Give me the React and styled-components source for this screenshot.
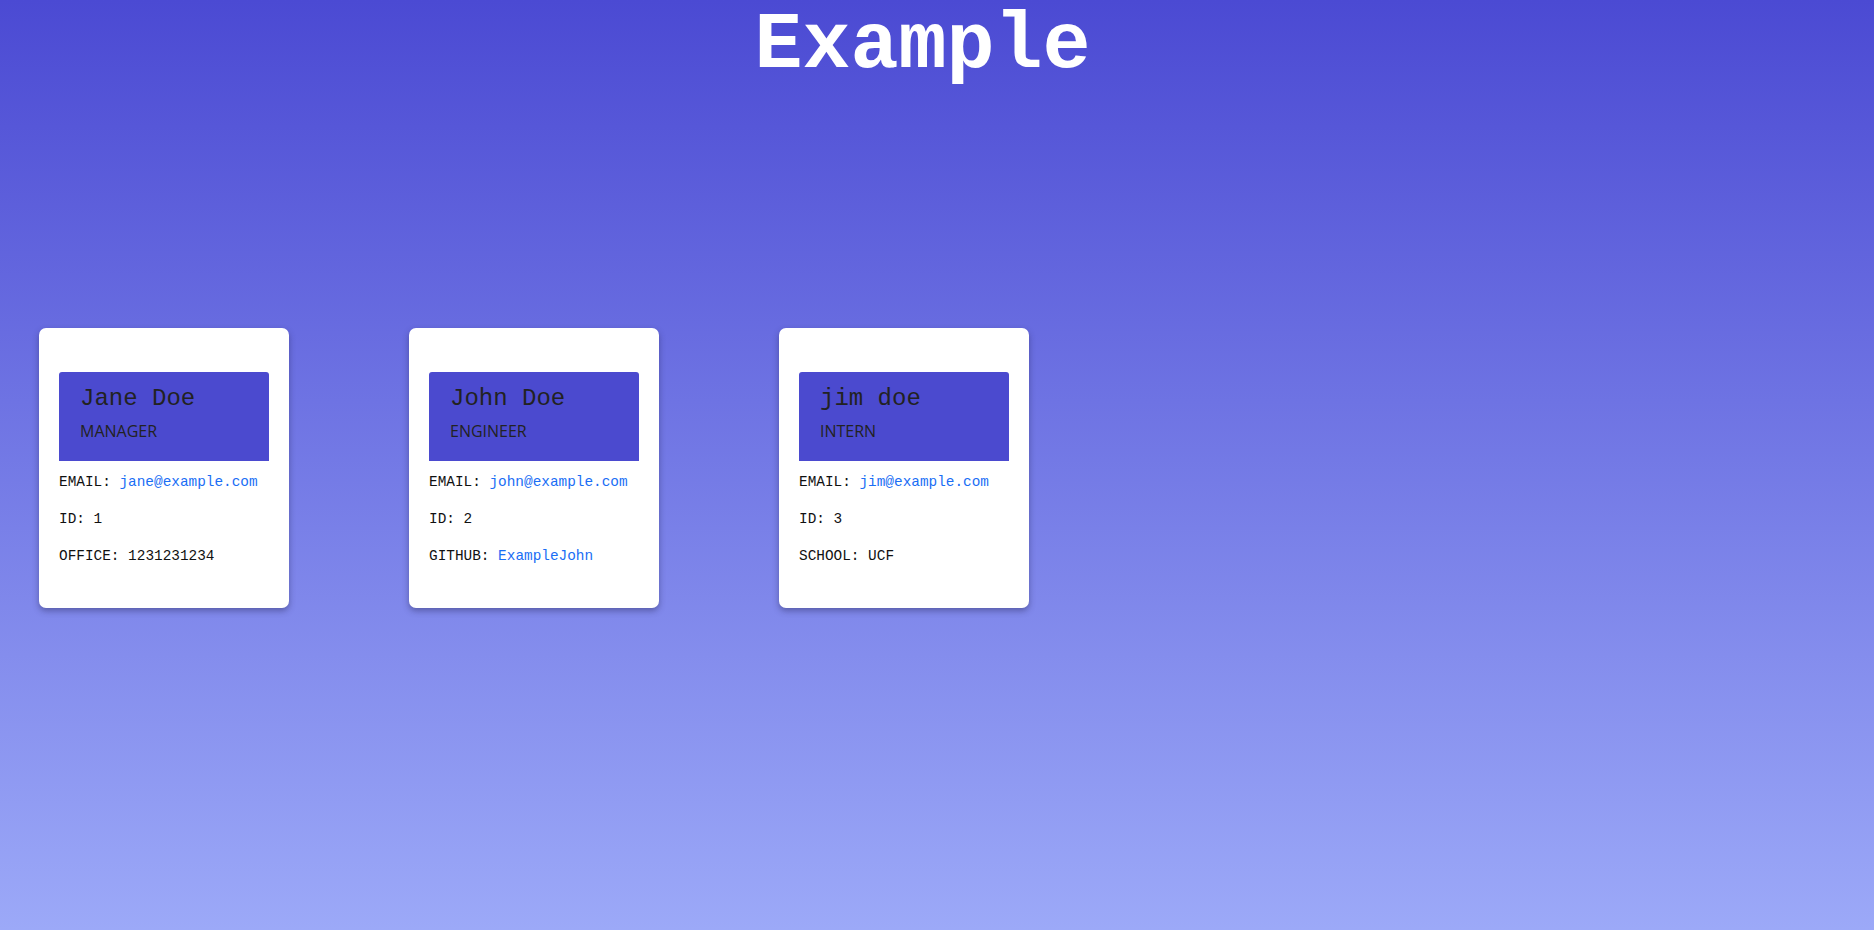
import React from 'react';
import styled, { createGlobalStyle } from 'styled-components';

const GlobalStyle = createGlobalStyle`
    html, body {
        margin: 0;
        padding: 0;
    }
    body {
        min-height: 930px;
        background: linear-gradient(180deg, #4b4ad3 0%, #9ca9f8 100%);
        font-family: "Liberation Mono", "Courier New", monospace;
    }
`;

const Page = styled.div`
    min-height: 930px;
`;

const Title = styled.h1`
    margin: 0;
    padding-right: 29px;
    text-align: center;
    color: #fff;
    font-family: "Liberation Mono", "Courier New", monospace;
    font-weight: 700;
    font-size: 80px;
    line-height: 91px;
`;

const CardRow = styled.div`
    display: flex;
    gap: 120px;
    padding: 237px 0 0 39px;
`;

const Card = styled.div`
    width: 250px;
    height: 280px;
    box-sizing: border-box;
    padding: 44px 20px 0;
    background: #fff;
    border-radius: 7px;
    box-shadow: 0 3px 6px rgba(40, 40, 90, 0.45);
`;

const Header = styled.div`
    height: 89px;
    box-sizing: border-box;
    padding: 15px 21px 0;
    background: #4b4acf;
    border-radius: 3px 3px 0 0;
`;

const Name = styled.div`
    font-family: "Liberation Mono", "Courier New", monospace;
    font-size: 24px;
    line-height: 24px;
    color: #222;
`;

const Role = styled.div`
    margin-top: 9px;
    font-family: "Open Sans", sans-serif;
    font-size: 16px;
    line-height: 22px;
    color: #222;
`;

const Info = styled.ul`
    list-style: none;
    margin: 0;
    padding: 11px 0 0;
`;

const Item = styled.li`
    height: 37px;
    font-family: "Liberation Mono", "Courier New", monospace;
    font-size: 14.4px;
    line-height: 20px;
    color: #111;
`;

const Link = styled.a`
    color: #1a6ef5;
    text-decoration: none;
`;

const employees = [
    {
        name: 'Jane Doe',
        role: 'MANAGER',
        email: 'jane@example.com',
        id: 1,
        extra: { label: 'OFFICE', value: '1231231234' },
    },
    {
        name: 'John Doe',
        role: 'ENGINEER',
        email: 'john@example.com',
        id: 2,
        extra: { label: 'GITHUB', value: 'ExampleJohn', link: true },
    },
    {
        name: 'jim doe',
        role: 'INTERN',
        email: 'jim@example.com',
        id: 3,
        extra: { label: 'SCHOOL', value: 'UCF' },
    },
];

export default function App() {
    return (
        <Page>
            <GlobalStyle />
            <Title>Example</Title>
            <CardRow>
                {employees.map((e) => (
                    <Card key={e.id}>
                        <Header>
                            <Name>{e.name}</Name>
                            <Role>{e.role}</Role>
                        </Header>
                        <Info>
                            <Item>EMAIL: <Link href="#">{e.email}</Link></Item>
                            <Item>ID: {e.id}</Item>
                            <Item>
                                {e.extra.label}:{' '}
                                {e.extra.link ? <Link href="#">{e.extra.value}</Link> : e.extra.value}
                            </Item>
                        </Info>
                    </Card>
                ))}
            </CardRow>
        </Page>
    );
}
